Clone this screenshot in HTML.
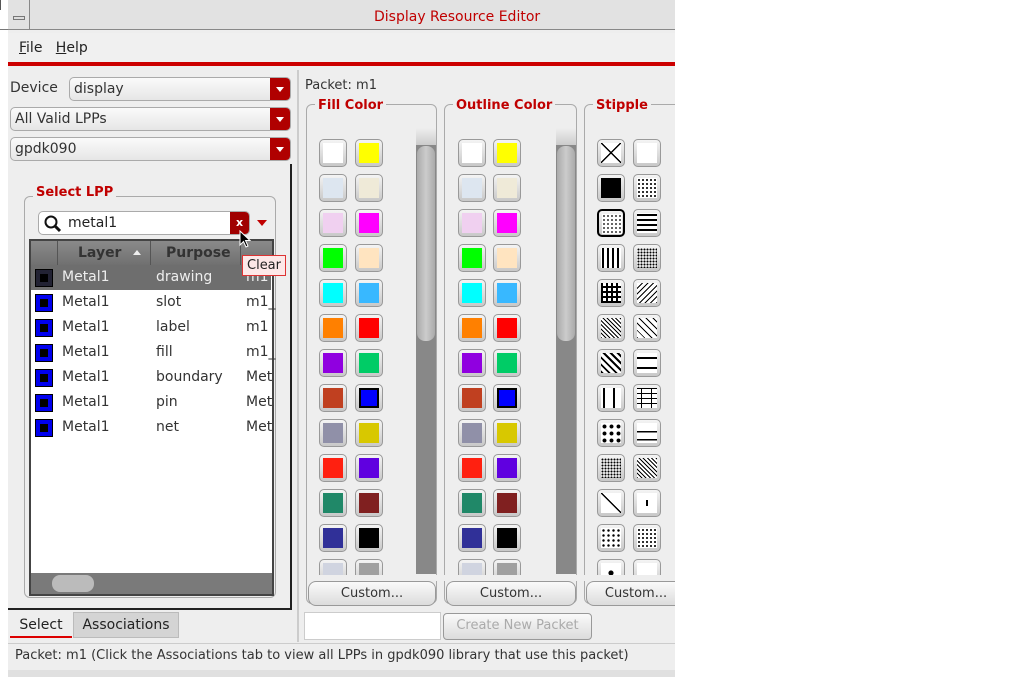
<!DOCTYPE html>
<html><head><meta charset="utf-8"><style>
*{box-sizing:border-box;margin:0;padding:0}
body{width:1013px;height:677px;background:#fff;font-family:"DejaVu Sans","Liberation Sans",sans-serif;font-size:13px;color:#222;position:relative;overflow:hidden}
.a{position:absolute}
.win{left:8px;top:0;width:667px;height:677px;background:#eeeeee}
.combo{position:absolute;height:24px;border:1px solid #aaa;border-radius:5px;background:linear-gradient(#fafafa,#e6e6e6);padding:3px 4px;font-size:14px;color:#333}
.combo .ar{position:absolute;right:0;top:0;width:20px;height:22px;background:#b00000;border-radius:0 4px 4px 0}
.combo .ar:after{content:"";position:absolute;left:6px;top:9px;border-left:4px solid transparent;border-right:4px solid transparent;border-top:5px solid #fff}
.grp{position:absolute;border:1px solid #aaa;border-radius:6px}
.gt{position:absolute;top:-7px;left:8px;background:#eee;padding:0 3px;color:#c00000;font-weight:bold;font-size:13px}
.sw{position:absolute;width:28px;height:28px;border:1px solid #999;border-radius:5px;background:linear-gradient(#f4f4f4,#c8c8c8);}
.sw i{position:absolute;left:3px;top:3px;width:20px;height:20px;display:block}
.sb{position:absolute;width:20px;background:#888}
.sb .up{position:absolute;left:0;top:0;width:20px;height:17px;background:linear-gradient(#eee,#ccc)}
.sb .th{position:absolute;left:1px;right:1px;top:18px;height:195px;background:linear-gradient(90deg,#aaa,#ccc,#aaa);border-radius:8px}
.btn{position:absolute;height:25px;border:1px solid #999;border-radius:8px;background:linear-gradient(#fafafa,#dcdcdc);text-align:center;font-size:13px;line-height:23px;color:#333}
.row{position:absolute;left:31px;width:240px;height:25px;font-size:14px;line-height:25px;color:#333}
.row span{position:absolute}
.ic{position:absolute;left:4px;top:4px;width:18px;height:18px;background:#0000ee;border:1px solid #000}
.ic:after{content:"";position:absolute;left:4px;top:4px;width:8px;height:8px;background:#000}
</style></head><body>
<div class="a" style="left:0;top:0;width:1px;height:10px;background:#555"></div>
<div class="a" style="left:0;top:29px;width:675px;height:1px;background:#777"></div>
<div class="a win"></div>
<div class="a" style="left:8px;top:0;width:667px;height:30px;background:#e2e2e2;border-bottom:1px solid #888"></div>
<div class="a" style="left:8px;top:0;width:22px;height:30px;border-right:1px solid #888"></div>
<div class="a" style="left:13px;top:16px;width:12px;height:4px;border:1px solid #777;background:#ddd"></div>
<div class="a" style="left:374px;top:9px;color:#c00000;font-size:14px">Display Resource Editor</div>
<div class="a" style="left:8px;top:33px;width:667px;height:30px;background:#f0f0f0"></div>
<div class="a" style="left:19px;top:40px;font-size:14px"><u>F</u>ile&nbsp;&nbsp;&nbsp;<u>H</u>elp</div>
<div class="a" style="left:8px;top:62px;width:667px;height:4px;background:#cc0000"></div>

<div class="a" style="left:10px;top:80px;font-size:14px;color:#333">Device</div>
<div class="combo" style="left:69px;top:77px;width:222px">display<div class="ar"></div></div>
<div class="combo" style="left:10px;top:107px;width:281px">All Valid LPPs<div class="ar"></div></div>
<div class="combo" style="left:10px;top:137px;width:281px">gpdk090<div class="ar"></div></div>
<div class="a" style="left:8px;top:164px;width:284px;height:446px;border-right:2px solid #222;border-bottom:2px solid #222"></div>
<div class="grp" style="left:24px;top:196px;width:252px;height:402px"><div class="gt" style="top:-12px">Select LPP</div></div>
<div class="a" style="left:38px;top:211px;width:212px;height:24px;border:1px solid #aaa;border-radius:5px;background:#fff"></div>
<svg class="a" style="left:43px;top:214px" width="20" height="20"><circle cx="8" cy="8" r="5.5" fill="none" stroke="#111" stroke-width="2"/><line x1="12" y1="12" x2="17" y2="17" stroke="#111" stroke-width="3"/></svg>
<div class="a" style="left:68px;top:215px;font-size:14px">metal1</div>
<div class="a" style="left:230px;top:212px;width:19px;height:22px;background:#a00000;border-radius:0 4px 4px 0;color:#fff;font-size:11px;font-weight:bold;text-align:center;line-height:22px">x</div>
<div class="a" style="left:257px;top:220px;border-left:5px solid transparent;border-right:5px solid transparent;border-top:6px solid #c00000"></div>
<div class="a" style="left:29px;top:239px;width:245px;height:357px;border:2px solid #444;background:#fff"></div>
<div class="a" style="left:31px;top:241px;width:241px;height:24px;background:linear-gradient(#8a8a8a,#707070)"></div>
<div class="a" style="left:57px;top:241px;width:1px;height:24px;background:#555"></div>
<div class="a" style="left:150px;top:241px;width:1px;height:24px;background:#555"></div>
<div class="a" style="left:240px;top:241px;width:1px;height:24px;background:#555"></div>
<div class="a" style="left:78px;top:245px;font-weight:bold;font-size:14px;color:#333">Layer</div>
<div class="a" style="left:133px;top:250px;border-left:4px solid transparent;border-right:4px solid transparent;border-bottom:5px solid #eee"></div>
<div class="a" style="left:166px;top:245px;font-weight:bold;font-size:14px;color:#333">Purpose</div>
<div class="row" style="top:265px;background:#6e6e6e;color:#eee"><div class="ic" style="background:#223"></div><span style="left:31px">Metal1</span><span style="left:125px">drawing</span><span style="left:215px">m1</span></div>
<div class="row" style="top:290px"><div class="ic"></div><span style="left:31px">Metal1</span><span style="left:125px">slot</span><span style="left:215px">m1_</span></div>
<div class="row" style="top:315px"><div class="ic"></div><span style="left:31px">Metal1</span><span style="left:125px">label</span><span style="left:215px">m1</span></div>
<div class="row" style="top:340px"><div class="ic"></div><span style="left:31px">Metal1</span><span style="left:125px">fill</span><span style="left:215px">m1_</span></div>
<div class="row" style="top:365px"><div class="ic"></div><span style="left:31px">Metal1</span><span style="left:125px">boundary</span><span style="left:215px">Met</span></div>
<div class="row" style="top:390px"><div class="ic"></div><span style="left:31px">Metal1</span><span style="left:125px">pin</span><span style="left:215px">Met</span></div>
<div class="row" style="top:415px"><div class="ic"></div><span style="left:31px">Metal1</span><span style="left:125px">net</span><span style="left:215px">Met</span></div>
<div class="a" style="left:31px;top:573px;width:241px;height:21px;background:#7a7a7a"></div>
<div class="a" style="left:52px;top:575px;width:42px;height:17px;background:#bbb;border-radius:8px"></div>
<div class="a" style="left:242px;top:255px;width:44px;height:21px;border:1px solid #d33;background:#fde8e8;font-size:13px;line-height:19px;text-align:center">Clear</div>
<svg class="a" style="left:239px;top:230px" width="14" height="20"><path d="M1 1 L1 15 L4.5 11.5 L7 17 L9 16 L6.5 10.5 L11 10.5 Z" fill="#000" stroke="#fff" stroke-width="1"/></svg>

<div class="a" style="left:10px;top:612px;width:62px;height:26px;font-size:14px;line-height:26px;text-align:center;border-bottom:2px solid #d00">Select</div>
<div class="a" style="left:73px;top:612px;width:106px;height:26px;background:#d4d4d4;border:1px solid #bbb;font-size:14px;line-height:24px;text-align:center">Associations</div>

<div class="a" style="left:297px;top:70px;width:2px;height:572px;background:#ccc"></div>
<div class="a" style="left:305px;top:78px;font-size:13px;color:#333">Packet: m1</div>
<div class="grp" style="left:306px;top:104px;width:131px;height:500px"><div class="gt">Fill Color</div></div>
<div class="grp" style="left:444px;top:104px;width:133px;height:500px"><div class="gt">Outline Color</div></div>
<div class="grp" style="left:584px;top:104px;width:100px;height:500px"><div class="gt">Stipple</div></div>
<div class="sb" style="left:416px;top:128px;height:446px"><div class="up"></div><div class="th"></div></div>
<div class="sb" style="left:556px;top:128px;height:446px"><div class="up"></div><div class="th"></div></div>

<div id="sw"></div>
<div class="btn" style="left:308px;top:581px;width:128px">Custom...</div>
<div class="btn" style="left:446px;top:581px;width:130px">Custom...</div>
<div class="btn" style="left:586px;top:581px;width:100px">Custom...</div>
<div class="a" style="left:304px;top:612px;width:137px;height:28px;background:#fff;border:1px solid #ccc"></div>
<div class="btn" style="left:443px;top:613px;width:149px;height:27px;border-radius:4px;color:#aaa;font-size:13px">Create New Packet</div>
<div class="a" style="left:8px;top:643px;width:667px;height:1px;background:#ccc"></div>
<div class="a" style="left:15px;top:648px;font-size:13px;color:#333">Packet: m1 (Click the Associations tab to view all LPPs in gpdk090 library that use this packet)</div>
<div class="a" style="left:8px;top:670px;width:667px;height:7px;background:#e0e0e0"></div>

<script>
var c=[["#fff","#ff0"],["#dde6f0","#efead8"],["#f0d0f0","#f0f"],["#0f0","#ffe4c0"],["#0ff","#38b8ff"],["#ff8000","#f00"],["#9000e0","#00cc66"],["#c04020","#00f"],["#9090a8","#d8c800"],["#ff2010","#6000e0"],["#208868","#802020"],["#303098","#000"],["#d0d4e0","#a0a0a0"]];
var W="#fff";
var st=[
"linear-gradient(45deg,transparent 48%,#000 48%,#000 53%,transparent 53%),linear-gradient(-45deg,transparent 48%,#000 48%,#000 53%,transparent 53%),#fff",
"#fff",
"#000",
"radial-gradient(#000 30%,transparent 40%) 0 0/4px 4px,#fff",
"radial-gradient(#000 25%,transparent 35%) 0 0/4px 4px,#fff",
"repeating-linear-gradient(#fff 0 1px,#000 1px 3px,#fff 3px 5px)",
"repeating-linear-gradient(90deg,#fff 0 1px,#000 1px 3px,#fff 3px 5px)",
"radial-gradient(#000 45%,transparent 55%) 0 0/3px 3px,#fff",
"repeating-linear-gradient(0deg,#000 0 2px,transparent 2px 5px),repeating-linear-gradient(90deg,#000 0 2px,#fff 2px 5px)",
"repeating-linear-gradient(-45deg,#000 0 1px,#fff 1px 4px)",
"repeating-linear-gradient(45deg,#000 0 1px,#fff 1px 3px)",
"repeating-linear-gradient(45deg,#000 0 1px,#fff 1px 5px)",
"repeating-linear-gradient(45deg,#000 0 2px,#fff 2px 5px)",
"repeating-linear-gradient(#fff 0 4px,#000 4px 6px,#fff 6px 10px)",
"repeating-linear-gradient(90deg,#fff 0 2px,#000 2px 4px,#fff 4px 10px)",
"repeating-linear-gradient(#000 0 1px,transparent 1px 5px),repeating-linear-gradient(90deg,#fff 0 4px,#000 4px 5px,#fff 5px 10px)",
"radial-gradient(#000 35%,transparent 45%) 0 0/7px 7px,#fff",
"linear-gradient(#fff 40%,#000 40%,#000 48%,#fff 48%,#fff 80%,#000 80%,#000 88%,#fff 88%)",
"radial-gradient(#000 45%,transparent 55%) 0 0/3px 3px,#fff",
"repeating-linear-gradient(45deg,#000 0 1px,#fff 1px 3px)",
"linear-gradient(45deg,transparent 48%,#000 48%,#000 53%,transparent 53%),#fff",
"linear-gradient(90deg,#fff 45%,#000 45%,#000 55%,#fff 55%) center/20px 6px no-repeat,#fff",
"radial-gradient(#000 30%,transparent 40%) 0 0/5px 5px,#fff",
"radial-gradient(#000 30%,transparent 40%) 0 0/4px 4px,#fff",
"radial-gradient(#000 40%,transparent 50%) center/8px 8px no-repeat,#fff",
"#fff"];
var h="";
for(var r=0;r<13;r++){var y=139+r*35;
 [[319,c[r][0]],[355,c[r][1]],[458,c[r][0]],[493,c[r][1]]].forEach(function(p,i){var b=(r==7&&(i==1||i==3))?"outline:2px solid #000;outline-offset:-2px;":"";h+='<div class="sw" style="left:'+p[0]+'px;top:'+y+'px"><i style="background:'+p[1]+';'+b+'"></i></div>';});
 [597,633].forEach(function(x,i){var s=st[r*2+i]||"#fff";var b=(r==2&&i==0)?"border:2px solid #000;":"";h+='<div class="sw" style="left:'+x+'px;top:'+y+'px;'+b+'"><i style="background:'+s+'"></i></div>';});
}
h+='<div class="a" style="left:307px;top:575px;width:370px;height:6px;background:#eee"></div>';
document.getElementById("sw").innerHTML=h;
</script>
<div class="a" style="left:675px;top:0;width:338px;height:677px;background:#fff"></div>
</body></html>
